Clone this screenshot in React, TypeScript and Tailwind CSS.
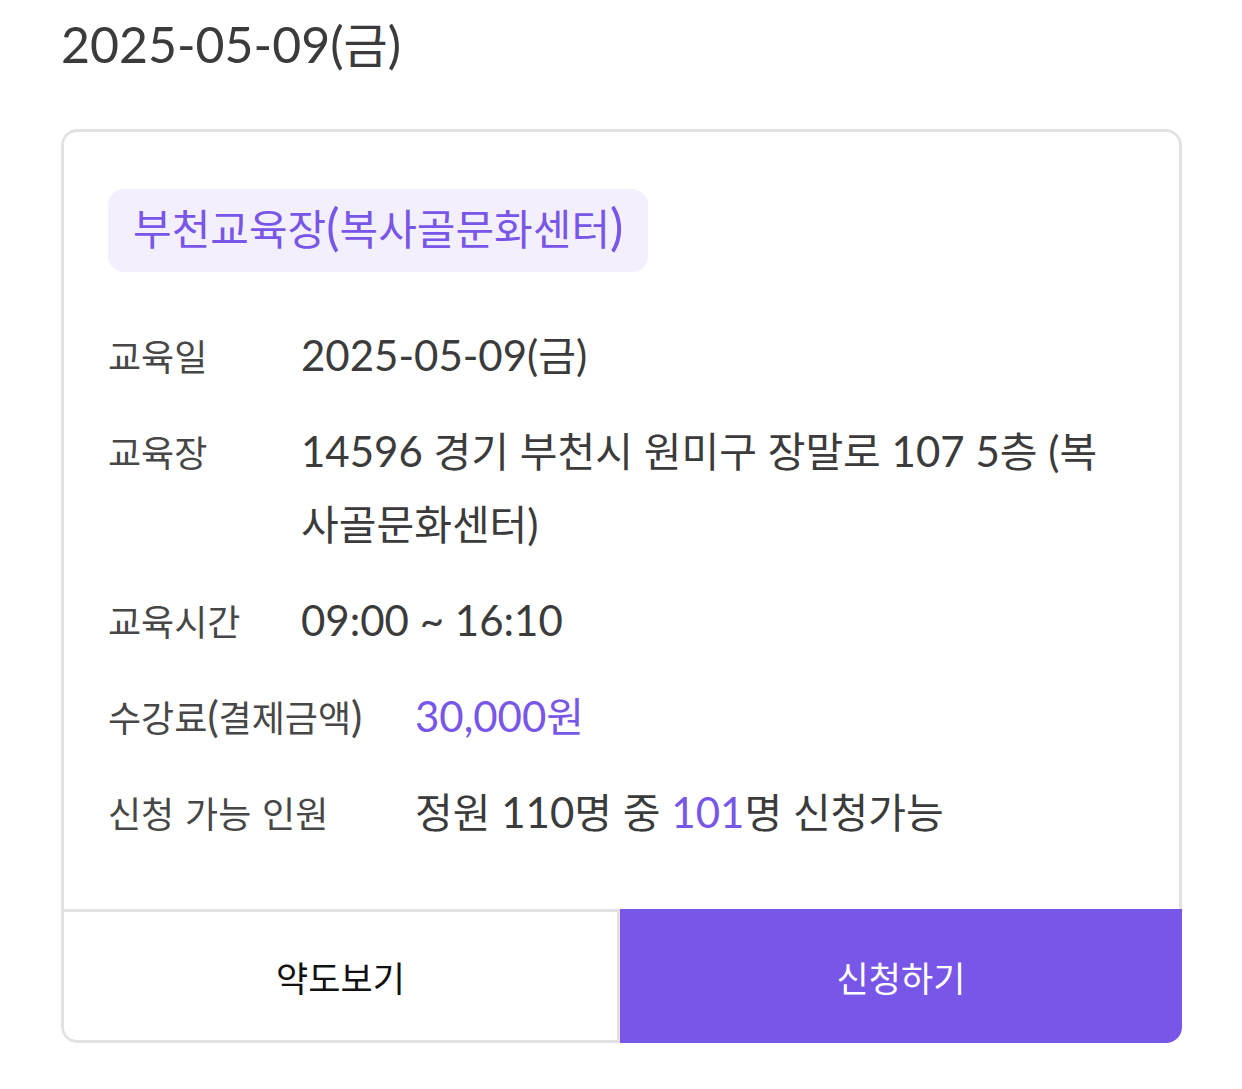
import React from "react";

const HANGUL = /([\uAC00-\uD7A3]+)/;

function T({ text, k }: { text: string; k: string }) {
  return (
    <>
      {text.split(HANGUL).map((p, i) =>
        i % 2 === 1 ? (
          <span key={i} className={k}>
            {p}
          </span>
        ) : (
          <React.Fragment key={i}>{p}</React.Fragment>
        )
      )}
    </>
  );
}

const LATIN = "font-['Lato','Noto_Sans_CJK_KR',sans-serif]";
const KC = "font-['Noto_Sans_CJK_KR',sans-serif] text-[41px] leading-none";
const KL = "font-['Noto_Sans_CJK_KR',sans-serif] text-[36px] leading-none";

function Row({
  label,
  labelW,
  children,
}: {
  label: string;
  labelW: string;
  children: React.ReactNode;
}) {
  return (
    <div className={`flex items-start text-[42px] leading-[73px] ${LATIN}`}>
      <div className={`${labelW} shrink-0 text-[#474747]`}>
        <T text={label} k={KL} />
      </div>
      <div className="min-w-0 flex-1 text-[#3b3b3b]">{children}</div>
    </div>
  );
}

export default function App() {
  return (
    <div className={`min-h-[1089px] bg-white pl-[61px] pr-[60px] pt-[15px] ${LATIN}`}>
      <div className="text-[50px] leading-[58px] text-[#3b3b3b]">
        <T text="2025-05-09(금)" k="font-['Noto_Sans_CJK_KR',sans-serif] text-[48px] leading-none" />
      </div>

      <div className="mt-[56px] overflow-hidden rounded-[16px]">
        <div className="rounded-t-[16px] border-[3px] border-b-0 border-[#e2e2e2] px-[44px] pb-[60px] pt-[57px]">
          <div className="inline-block h-[83px] rounded-[16px] bg-[#f3effd] px-[25px] pb-[8px] text-[50px] leading-[75px] text-[#7856e8]">
            <T text="부천교육장(복사골문화센터)" k="font-['Noto_Sans_CJK_KR',sans-serif] text-[42px] leading-none" />
          </div>

          <div className="mt-[47px] flex flex-col gap-[23px] pr-[24px]">
            <Row label="교육일" labelW="w-[193px]">
              <T text="2025-05-09(금)" k={KC} />
            </Row>
            <Row label="교육장" labelW="w-[193px]">
              <T text="14596 경기 부천시 원미구 장말로 107 5층 (복사골문화센터)" k={KC} />
            </Row>
            <Row label="교육시간" labelW="w-[193px]">
              09:00 ~ 16:10
            </Row>
            <Row label="수강료(결제금액)" labelW="w-[307px]">
              <span className="text-[#7856e8]">
                <T text="30,000원" k={KC} />
              </span>
            </Row>
            <Row label="신청 가능 인원" labelW="w-[307px]">
              <T text="정원 110명 중 " k={KC} />
              <span className="text-[#7856e8]">101</span>
              <T text="명 신청가능" k={KC} />
            </Row>
          </div>
        </div>

        <div className="flex h-[134px]">
          <button className="flex w-[559px] shrink-0 items-center justify-center rounded-bl-[16px] border-[3px] border-[#e2e2e2] bg-white font-['Noto_Sans_CJK_KR',sans-serif] text-[35px] leading-none text-[#111111]">
            약도보기
          </button>
          <button className="flex flex-1 items-center justify-center bg-[#7856e8] font-['Noto_Sans_CJK_KR',sans-serif] text-[35px] leading-none text-white">
            신청하기
          </button>
        </div>
      </div>
    </div>
  );
}
